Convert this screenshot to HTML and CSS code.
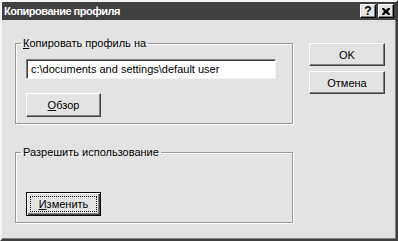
FILE: index.html
```html
<!DOCTYPE html>
<html lang="ru">

<head>
    <meta charset="UTF-8">
    <title>Копирование профиля</title>
    <link rel="stylesheet" href="styles.css">
</head>

<body>
    <div class="window">
        <div class="titlebar">
            <span class="title">Копирование профиля</span>
            <div class="title-buttons">
                <span class="tbtn">?</span>
                <span class="tbtn tbtn-close">
                    <svg width="8" height="7" viewBox="0 0 8 7"><path d="M0 0h2l2 2 2-2h2v1l-2 2.5 2 2.5v1h-2l-2-2-2 2h-2v-1l2-2.5-2-2.5z" fill="#000"/></svg>
                </span>
            </div>
        </div>
        <div class="main">
            <div class="groups">
                <fieldset class="group group-copy">
                    <legend><u>К</u>опировать профиль на</legend>
                    <div class="path-input">c:\documents and settings\default user</div>
                    <button class="btn btn-browse"><u>О</u>бзор</button>
                </fieldset>
                <fieldset class="group group-perm">
                    <legend>Разрешить использование</legend>
                    <button class="btn btn-default"><span class="focus"><u>И</u>зменить</span></button>
                </fieldset>
            </div>
            <div class="actions">
                <button class="btn btn-side">OK</button>
                <button class="btn btn-side">Отмена</button>
            </div>
        </div>
    </div>
</body>

</html>
```

FILE: styles.css
```css
* {
    margin: 0;
    padding: 0;
    box-sizing: border-box
}

body {
    background: #e3e3e3;
    font-family: "Liberation Sans", Arial, sans-serif;
    font-size: 11px;
    color: #000
}

.window {
    width: 398px;
    height: 241px;
    background: #e3e3e3;
    border-top: 2px solid #f4f4f4;
    border-left: 2px solid #f4f4f4;
    border-right: 2px solid #404040;
    border-bottom: 2px solid #404040;
    box-shadow: inset -1px -1px #808080
}

.titlebar {
    height: 18px;
    background: #404040;
    display: flex;
    align-items: center;
    justify-content: space-between;
    padding: 0 2px 0 2px
}

.title {
    color: #fff;
    font-weight: bold;
    font-size: 11px;
    letter-spacing: -0.5px
}

.title-buttons {
    display: flex;
    gap: 2px
}

.tbtn {
    width: 16px;
    height: 14px;
    background: #e3e3e3;
    border-top: 1px solid #fff;
    border-left: 1px solid #fff;
    border-right: 1px solid #000;
    border-bottom: 1px solid #000;
    box-shadow: inset -1px -1px #808080;
    font-weight: bold;
    font-size: 12px;
    line-height: 12px;
    text-align: center;
    display: flex;
    align-items: center;
    justify-content: center
}

.main {
    display: flex;
    align-items: flex-start;
    padding: 16px 0 0 13px
}

.groups {
    width: 278px;
    display: flex;
    flex-direction: column;
    gap: 21px
}

.group {
    min-width: 0;
    border: 1px solid #999;
    box-shadow: inset 1px 1px #fff, 1px 1px #fff;
    padding: 0 0 0 10px
}

.group legend {
    margin-left: -5px;
    padding: 0 2px;
    line-height: 14px
}

.group-copy {
    padding-top: 9px;
    padding-bottom: 6px
}

.group-perm {
    padding-top: 33px;
    padding-bottom: 6px
}

.path-input {
    width: 250px;
    height: 20px;
    background: #fff;
    border-top: 1px solid #808080;
    border-left: 1px solid #808080;
    border-right: 1px solid #f4f4f4;
    border-bottom: 1px solid #f4f4f4;
    box-shadow: inset 1px 1px #404040;
    padding: 0 0 0 4px;
    line-height: 18px;
    white-space: nowrap;
    overflow: hidden
}

.btn {
    display: block;
    width: 75px;
    height: 24px;
    background: #e3e3e3;
    font: inherit;
    color: #000;
    border-top: 1px solid #fff;
    border-left: 1px solid #fff;
    border-right: 1px solid #404040;
    border-bottom: 1px solid #404040;
    box-shadow: inset -1px -1px #808080
}

.btn-browse {
    margin-top: 14px
}

.btn-default {
    border: 1px solid #000;
    box-shadow: inset 1px 1px #fff, inset -1px -1px #404040, inset -2px -2px #808080;
    padding: 3px
}

.btn-default .focus {
    display: block;
    height: 100%;
    border: 1px dotted #000;
    line-height: 14px
}

.actions {
    display: flex;
    flex-direction: column;
    gap: 5px;
    padding: 7px 0 0 16px
}

.btn-side {
    width: 76px;
    height: 23px
}
```
